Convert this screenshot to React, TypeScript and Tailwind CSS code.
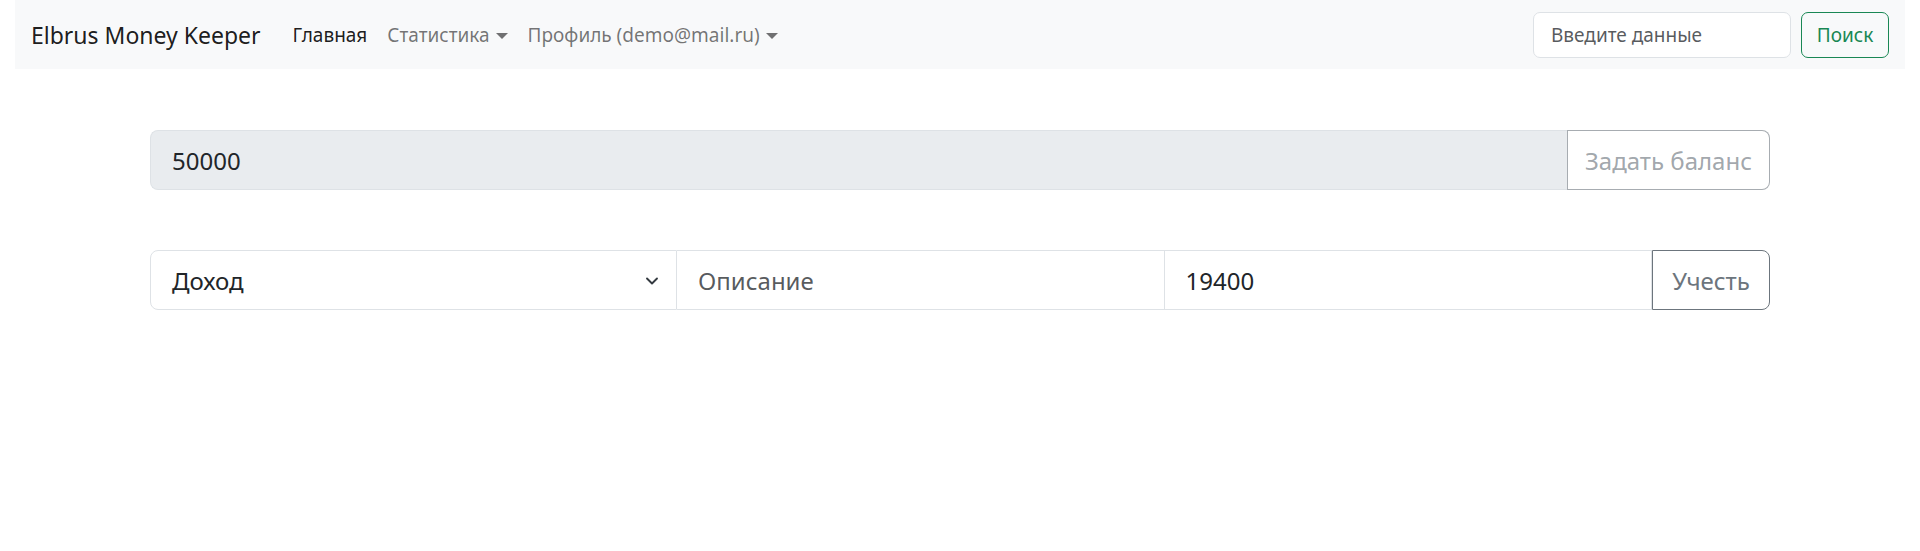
import { ChevronDown } from 'lucide-react';

const font = { fontFamily: '"Noto Sans", "Open Sans", sans-serif' };

function Caret() {
  return (
    <svg width="12" height="8" viewBox="0 0 12 8" className="ml-[6px] inline-block">
      <polygon points="0,1 12,1 6,7" fill="currentColor" />
    </svg>
  );
}

export default function App() {
  return (
    <div className="min-h-screen bg-white text-[#212529]" style={font}>
      {/* Navbar */}
      <nav className="mx-[15px] flex h-[69px] items-center justify-between bg-[#f8f9fa] px-[16px]">
        <div className="flex items-center pt-[2px]">
          <span className="mr-[32px] text-[23px] text-black/90">Elbrus Money Keeper</span>
          <div className="flex items-center gap-[20px] text-[19px]">
            <span className="text-black/90">Главная</span>
            <span className="flex items-center text-black/55">
              Статистика
              <Caret />
            </span>
            <span className="flex items-center text-black/55">
              Профиль (demo@mail.ru)
              <Caret />
            </span>
          </div>
        </div>
        <div className="flex items-center gap-[10px]">
          <input
            placeholder="Введите данные"
            className="h-[46px] w-[258px] rounded-[7px] border border-[#dee2e6] bg-white px-[17px] text-[19px] outline-none placeholder:text-[#212529]/75"
          />
          <button className="h-[46px] w-[88px] rounded-[7px] border border-[#198754] pt-[2px] text-[19px] text-[#198754]">
            Поиск
          </button>
        </div>
      </nav>

      {/* Content */}
      <div className="mx-auto mt-[61px] flex w-[1620px] flex-col gap-[60px] text-[24px]">
        <div className="flex h-[60px]">
          <div className="flex flex-1 items-center rounded-l-[8px] border border-r-0 border-[#dee2e6] bg-[#e9ecef] px-[21px] pt-[2px]">
            50000
          </div>
          <button
            disabled
            className="w-[203px] rounded-r-[8px] border border-[#6c757d]/60 bg-white pt-[2px] text-[#6c757d]/65"
          >
            Задать баланс
          </button>
        </div>

        <div className="flex h-[60px]">
          <div className="flex w-[527px] items-center justify-between rounded-l-[8px] border border-[#dee2e6] pl-[21px] pr-[14px] pt-[2px]">
            <span>Доход</span>
            <ChevronDown size={20} strokeWidth={2.25} className="text-[#343a40]" />
          </div>
          <div className="flex flex-1 items-center border border-l-0 border-[#dee2e6] px-[21px] pt-[2px] text-[#212529]/75">
            Описание
          </div>
          <div className="flex flex-1 items-center border border-l-0 border-[#dee2e6] px-[21px] pt-[2px]">
            19400
          </div>
          <button className="w-[118px] rounded-r-[8px] border border-[#6c757d] pt-[2px] text-[#6c757d]">
            Учесть
          </button>
        </div>
      </div>
    </div>
  );
}
